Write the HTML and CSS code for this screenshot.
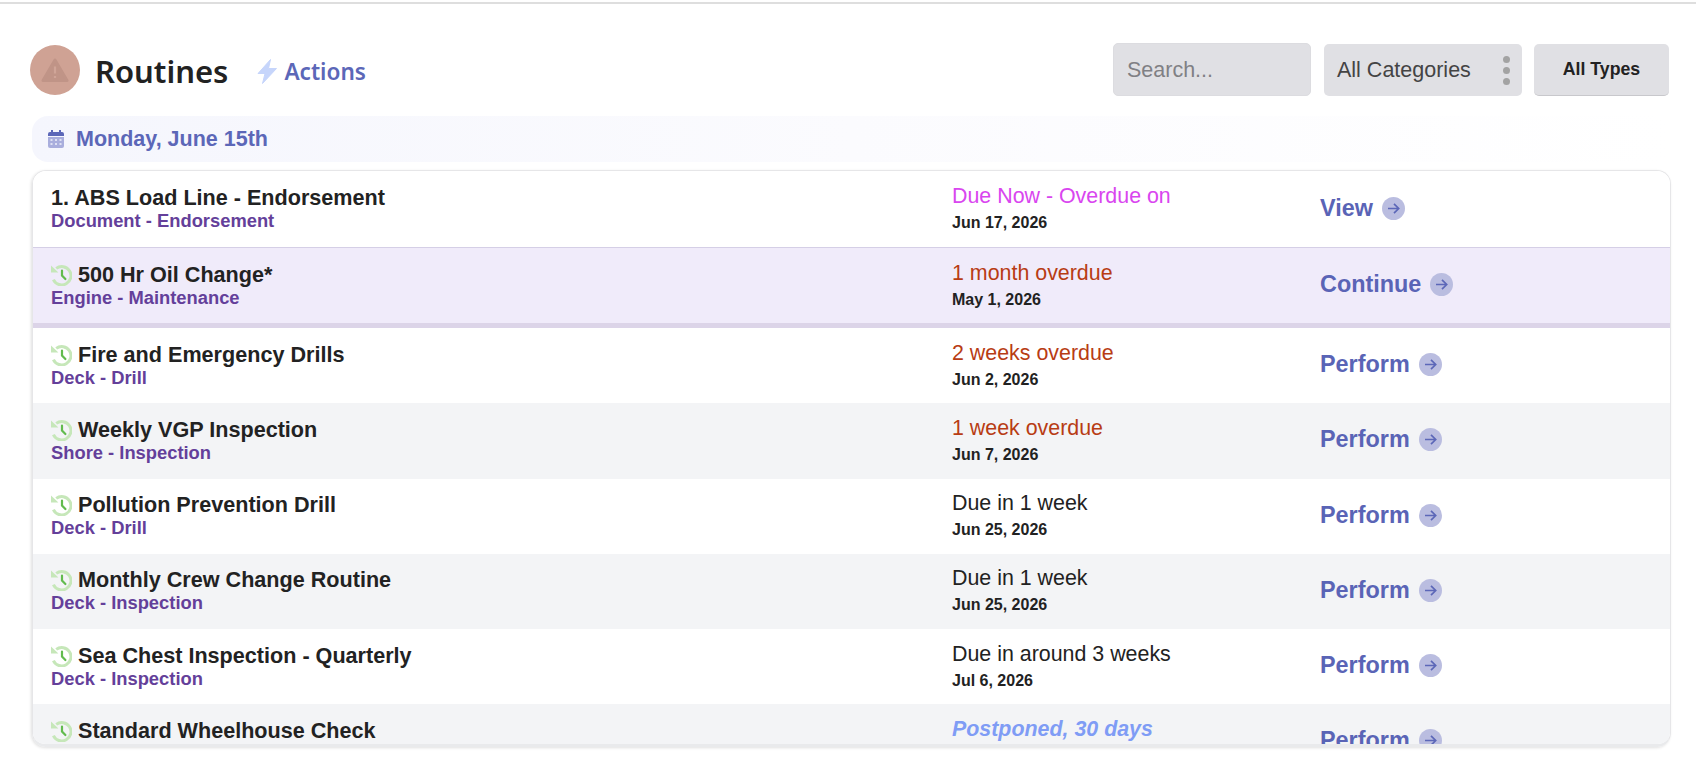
FILE: index.html
```html
<!DOCTYPE html>
<html lang="en">
<head>
    <meta charset="UTF-8">
    <meta name="viewport" content="width=device-width, initial-scale=1.0">
    <title>Routines</title>
    <link rel="stylesheet" href="styles.css">
</head>
<body>
    <svg class="icon-defs" width="0" height="0">
        <symbol id="history" viewBox="0 0 21 22">
            <path d="M5.2 4.4A9.2 9.2 0 1 1 2.4 15.6" fill="none" stroke="#c6e7b9" stroke-width="3"/>
            <path d="M0 1.4L0 8.6L7.4 8.6Z" fill="#c6e7b9"/>
            <path d="M11 6.5L11 11.5L14.4 15" fill="none" stroke="#62bb4e" stroke-width="2.2" stroke-linecap="round"/>
        </symbol>
        <symbol id="arrow" viewBox="0 0 23 23">
            <circle cx="11.5" cy="11.5" r="11.5" fill="#babde0"/>
            <path d="M6 11.5H16.5M12 6.8L16.7 11.5L12 16.2" fill="none" stroke="#5c67b8" stroke-width="1.7"/>
        </symbol>
    </svg>

    <div class="top-rule"></div>

    <header class="page-header">
        <div class="title-group">
            <span class="alert-badge">
                <svg width="28" height="25" viewBox="0 0 28 25">
                    <path d="M14 2L26 22.5H2Z" fill="#c09487" stroke="#c09487" stroke-width="3" stroke-linejoin="round"/>
                    <path d="M14 8.5V15.5M14 18V20" stroke="#d0a598" stroke-width="2.2"/>
                </svg>
            </span>
            <h1>Routines</h1>
            <a class="actions-link" href="#">
                <svg width="20" height="25" viewBox="0 0 20 25">
                    <path d="M13.5 0.5L1 14.5H8L5.5 24.5L19.5 9.5H11.5Z" fill="#c6d5fb" stroke="#c6d5fb" stroke-linejoin="round"/>
                </svg>
                Actions
            </a>
        </div>
        <div class="filters">
            <input class="search-input" type="text" placeholder="Search...">
            <div class="category-select">
                <span>All Categories</span>
                <span class="dots"><i></i><i></i><i></i></span>
            </div>
            <button class="types-btn">All Types</button>
        </div>
    </header>

    <div class="date-banner">
        <svg width="16" height="18" viewBox="0 0 16 18">
            <path d="M0 7H16V16a2 2 0 0 1-2 2H2a2 2 0 0 1-2-2Z" fill="#a9aedd"/>
            <path d="M0 6V4a2 2 0 0 1 2-2H3V0H5V2H11V0H13V2H14a2 2 0 0 1 2 2V6Z" fill="#5c67b8"/>
            <path d="M2.5 9h2v2h-2zM7 9h2v2H7zM11.5 9h2v2h-2zM2.5 13h2v2h-2zM7 13h2v2H7zM11.5 13h2v2h-2z" fill="#dfe1f3"/>
        </svg>
        Monday, June 15th
    </div>

    <div class="routine-list">
        <div class="routine-row first">
            <div class="routine-info">
                <div class="routine-name">1. ABS Load Line - Endorsement</div>
                <div class="routine-category">Document - Endorsement</div>
            </div>
            <div class="due-info">
                <div class="due-status due-now">Due Now - Overdue on</div>
                <div class="due-date">Jun 17, 2026</div>
            </div>
            <a class="row-action" href="#">View <svg width="23" height="23"><use href="#arrow"/></svg></a>
        </div>

        <div class="routine-row active">
            <div class="routine-info">
                <div class="routine-name"><svg width="21" height="22"><use href="#history"/></svg>500 Hr Oil Change*</div>
                <div class="routine-category">Engine - Maintenance</div>
            </div>
            <div class="due-info">
                <div class="due-status overdue">1 month overdue</div>
                <div class="due-date">May 1, 2026</div>
            </div>
            <a class="row-action" href="#">Continue <svg width="23" height="23"><use href="#arrow"/></svg></a>
        </div>

        <div class="routine-row">
            <div class="routine-info">
                <div class="routine-name"><svg width="21" height="22"><use href="#history"/></svg>Fire and Emergency Drills</div>
                <div class="routine-category">Deck - Drill</div>
            </div>
            <div class="due-info">
                <div class="due-status overdue">2 weeks overdue</div>
                <div class="due-date">Jun 2, 2026</div>
            </div>
            <a class="row-action" href="#">Perform <svg width="23" height="23"><use href="#arrow"/></svg></a>
        </div>

        <div class="routine-row striped">
            <div class="routine-info">
                <div class="routine-name"><svg width="21" height="22"><use href="#history"/></svg>Weekly VGP Inspection</div>
                <div class="routine-category">Shore - Inspection</div>
            </div>
            <div class="due-info">
                <div class="due-status overdue">1 week overdue</div>
                <div class="due-date">Jun 7, 2026</div>
            </div>
            <a class="row-action" href="#">Perform <svg width="23" height="23"><use href="#arrow"/></svg></a>
        </div>

        <div class="routine-row">
            <div class="routine-info">
                <div class="routine-name"><svg width="21" height="22"><use href="#history"/></svg>Pollution Prevention Drill</div>
                <div class="routine-category">Deck - Drill</div>
            </div>
            <div class="due-info">
                <div class="due-status">Due in 1 week</div>
                <div class="due-date">Jun 25, 2026</div>
            </div>
            <a class="row-action" href="#">Perform <svg width="23" height="23"><use href="#arrow"/></svg></a>
        </div>

        <div class="routine-row striped">
            <div class="routine-info">
                <div class="routine-name"><svg width="21" height="22"><use href="#history"/></svg>Monthly Crew Change Routine</div>
                <div class="routine-category">Deck - Inspection</div>
            </div>
            <div class="due-info">
                <div class="due-status">Due in 1 week</div>
                <div class="due-date">Jun 25, 2026</div>
            </div>
            <a class="row-action" href="#">Perform <svg width="23" height="23"><use href="#arrow"/></svg></a>
        </div>

        <div class="routine-row">
            <div class="routine-info">
                <div class="routine-name"><svg width="21" height="22"><use href="#history"/></svg>Sea Chest Inspection - Quarterly</div>
                <div class="routine-category">Deck - Inspection</div>
            </div>
            <div class="due-info">
                <div class="due-status">Due in around 3 weeks</div>
                <div class="due-date">Jul 6, 2026</div>
            </div>
            <a class="row-action" href="#">Perform <svg width="23" height="23"><use href="#arrow"/></svg></a>
        </div>

        <!-- last row is cut by the list edge, the lines under it are not visible -->
        <div class="routine-row striped">
            <div class="routine-info">
                <div class="routine-name"><svg width="21" height="22"><use href="#history"/></svg>Standard Wheelhouse Check</div>
            </div>
            <div class="due-info">
                <div class="due-status postponed">Postponed, 30 days</div>
            </div>
            <a class="row-action" href="#">Perform <svg width="23" height="23"><use href="#arrow"/></svg></a>
        </div>
    </div>
</body>
</html>
```

FILE: styles.css
```css
body {
    margin: 0;
    height: 766px;
    overflow: hidden;
    background-color: #fff;
    color: #222;
    font-family: "Liberation Sans", Arial, sans-serif;
}
.icon-defs {
    position: absolute;
}
.top-rule {
    height: 2px;
    margin-top: 2px;
    background-color: #dedede;
}
.page-header {
    display: flex;
    justify-content: space-between;
    align-items: center;
    height: 54px;
    margin: 38px 27px 0 30px;
}
.title-group {
    display: flex;
    align-items: center;
    margin-top: 2px;
}
.alert-badge {
    display: flex;
    justify-content: center;
    align-items: center;
    width: 50px;
    height: 50px;
    border-radius: 50%;
    background-color: #cfa294;
}
h1 {
    margin: 2px 29px 0 15px;
    font-family: "Noto Sans", sans-serif;
    font-size: 31px;
    font-weight: 600;
}
.actions-link {
    display: flex;
    align-items: center;
    gap: 7px;
    margin-top: 3px;
    color: #5c67b8;
    font-family: "Noto Sans", sans-serif;
    font-size: 22.6px;
    font-weight: 600;
    text-decoration: none;
}
.filters {
    display: flex;
    align-items: center;
    gap: 12px;
}
.search-input {
    box-sizing: border-box;
    width: 198px;
    height: 53px;
    margin-right: 1px;
    padding: 2px 13px 0;
    border: 1px solid #dcdce0;
    border-radius: 5px;
    background-color: #e0e0e4;
    font-family: inherit;
    font-size: 21.5px;
}
.search-input::placeholder {
    color: #808084;
}
.category-select {
    box-sizing: border-box;
    display: flex;
    justify-content: space-between;
    align-items: center;
    width: 198px;
    height: 52px;
    margin-top: 2px;
    padding: 0 12px 0 13px;
    border-radius: 5px;
    background-color: #e0e0e4;
    color: #444;
    font-size: 21.5px;
}
.dots {
    display: flex;
    flex-direction: column;
    gap: 4px;
}
.dots i {
    width: 7px;
    height: 7px;
    border-radius: 50%;
    background-color: #a3a3a3;
}
.types-btn {
    width: 135px;
    height: 52px;
    margin-top: 2px;
    border: none;
    border-bottom: 1px solid #c8c8cc;
    border-radius: 5px;
    background-color: #e0e0e4;
    color: #222;
    font-family: inherit;
    font-size: 17.7px;
    font-weight: bold;
}
.date-banner {
    display: flex;
    align-items: center;
    gap: 12px;
    height: 46px;
    margin: 20px 26px 8px 32px;
    padding-left: 16px;
    border-radius: 16px;
    background: linear-gradient(90deg, #f5f6fd 0%, #fbfbfe 50%, #fff 100%);
    color: #5c67b8;
    font-size: 21.5px;
    font-weight: bold;
}
.routine-list {
    box-sizing: border-box;
    height: 577px;
    margin: 0 25px 0 32px;
    overflow: hidden;
    border: 1px solid #e6e6e8;
    border-bottom: 3px solid #e9eaec;
    border-radius: 14px;
    box-shadow: -1px 1px 3px rgba(0, 0, 0, 0.12);
}
.routine-row {
    box-sizing: border-box;
    display: grid;
    grid-template-columns: 901px 368px 1fr;
    align-items: center;
    height: 75.25px;
    padding-left: 18px;
    background-color: #fff;
}
.routine-row.first {
    height: 76px;
}
.routine-row.striped {
    background-color: #f3f4f6;
}
.routine-row.active {
    height: 81px;
    border-top: 1px solid #d5cfe6;
    border-bottom: 5px solid #dcd4e8;
    background-color: #f0ebfa;
}
.routine-info {
    min-height: 46px;
}
.due-info {
    min-height: 49px;
    margin-bottom: 1px;
}
.routine-name {
    display: flex;
    align-items: center;
    gap: 6px;
    font-size: 21.6px;
    font-weight: bold;
    line-height: 24px;
}
.routine-category {
    color: #643f9a;
    font-size: 18.35px;
    font-weight: bold;
    line-height: 22px;
}
.due-status {
    font-size: 21.4px;
    line-height: 24px;
}
.due-status.due-now {
    color: #d946ef;
}
.due-status.overdue {
    color: #b83c14;
}
.due-status.postponed {
    color: #7f9cf5;
    font-style: italic;
    font-weight: bold;
}
.due-date {
    margin-top: 5px;
    font-size: 16px;
    font-weight: bold;
    line-height: 20px;
}
.row-action {
    display: flex;
    align-items: center;
    gap: 9px;
    margin-bottom: 2px;
    color: #5a64b6;
    font-size: 23.4px;
    font-weight: bold;
    text-decoration: none;
}
```
